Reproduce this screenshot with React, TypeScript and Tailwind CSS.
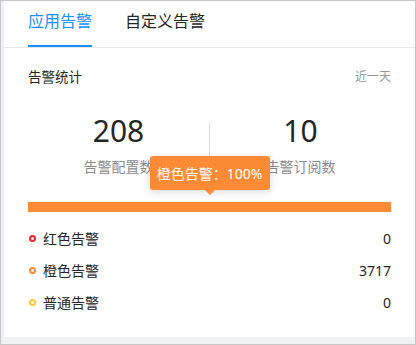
import * as React from 'react';

const rows = [
  { name: '红色告警', value: '0', ring: 'border-[#f5222d]' },
  { name: '橙色告警', value: '3717', ring: 'border-[#fd8a35]' },
  { name: '普通告警', value: '0', ring: 'border-[#fcc934]' },
];

export default function App() {
  return (
    <div className="w-[416px] h-[345px] border border-[#c6c6c6] bg-[#f0f2f5] pl-[3px] pb-[7px] flex flex-col font-['Noto_Sans','Noto_Sans_CJK_SC',sans-serif]">
      <div className="flex-1 bg-white flex flex-col">
        {/* tabs */}
        <div className="h-[47px] border-b border-[#e8e8e8] flex items-end pl-[24px] gap-[33px]">
          <div className="h-full flex flex-col justify-between">
            <div className="text-[16px] leading-[20px] text-[#1890ff] pt-[10px]">应用告警</div>
            <div className="h-[2px] bg-[#1890ff]" />
          </div>
          <div className="h-full flex flex-col justify-between">
            <div className="text-[16px] leading-[20px] text-[#262626] pt-[10px]">自定义告警</div>
            <div className="h-[2px]" />
          </div>
        </div>

        <div className="pl-[24px] pr-[24px] pt-[19px]">
          <div className="flex items-center justify-between h-[20px]">
            <span className="text-[13.5px] text-[#262626]">告警统计</span>
            <span className="text-[12px] text-[#999]">近一天</span>
          </div>

          {/* totals */}
          <div className="flex mt-[25px]">
            <div className="flex-1 flex flex-col items-center">
              <div className="text-[30px] leading-[38px] text-[#262626]">208</div>
              <div className="text-[14px] leading-[20px] text-[#8c8c8c] mt-[7px]">告警配置数</div>
            </div>
            <div className="w-px h-[35px] bg-[#e0e0e0] mt-[10px]" />
            <div className="flex-1 flex flex-col items-center">
              <div className="text-[30px] leading-[38px] text-[#262626]">10</div>
              <div className="text-[14px] leading-[20px] text-[#8c8c8c] mt-[7px]">告警订阅数</div>
            </div>
          </div>

          {/* bar + tooltip */}
          <div className="relative mt-[25px]">
            <div className="h-[10px] bg-[#fd8a35]" />
            <div className="absolute left-1/2 -translate-x-1/2 bottom-[22px] w-[120px] h-[34px] rounded-[3px] bg-[#fd8a35] shadow-[0_2px_8px_rgba(0,0,0,0.15)] flex items-center justify-center text-[14px] text-white">
              橙色告警：100%
              <div className="absolute left-1/2 -translate-x-1/2 top-full w-0 h-0 border-l-[5px] border-r-[5px] border-t-[5px] border-l-transparent border-r-transparent border-t-[#fd8a35]" />
            </div>
          </div>

          {/* legend */}
          <div className="mt-[10px] flex flex-col">
            {rows.map((r) => (
              <div key={r.name} className="h-[32px] flex items-center">
                <span className={`w-[7px] h-[7px] rounded-full border-2 ${r.ring} ml-[1px]`} />
                <span className="ml-[7px] text-[14px] text-[#262626]">{r.name}</span>
                <span className="ml-auto text-[14px] text-[#262626]">{r.value}</span>
              </div>
            ))}
          </div>
        </div>
      </div>
    </div>
  );
}
